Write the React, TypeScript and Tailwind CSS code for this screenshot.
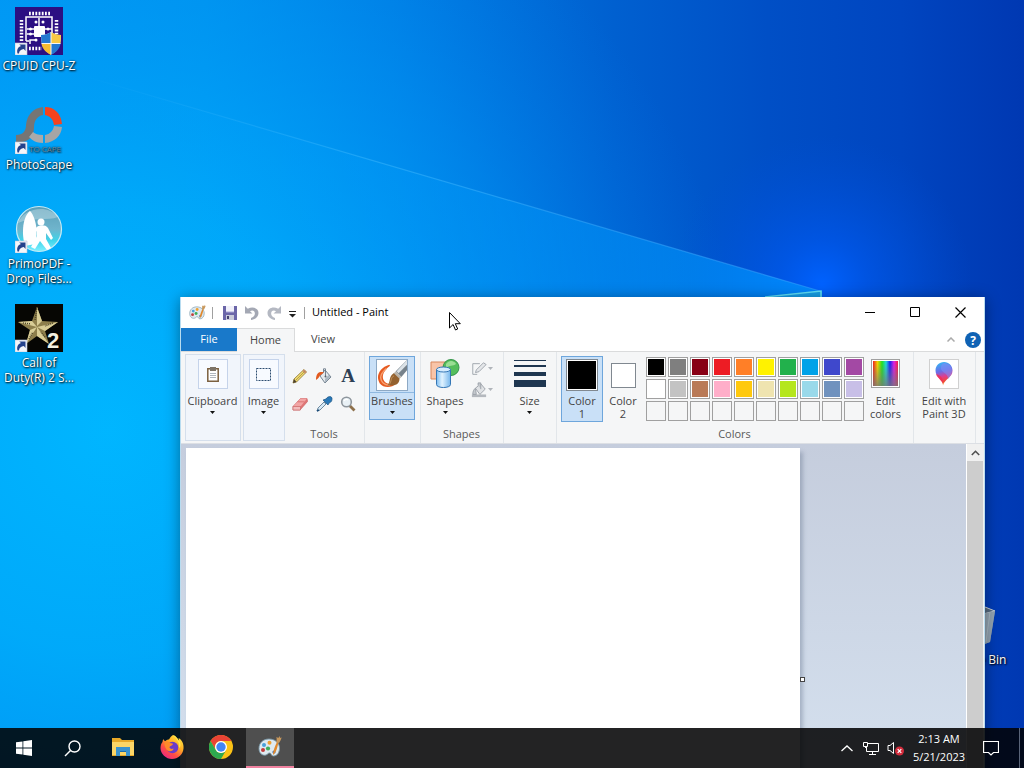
import type { ReactNode } from 'react'
import { clsx } from 'clsx'

const paletteColors = [
  ['Black', '#000000'],
  ['Gray-50%', '#7f7f7f'],
  ['Dark red', '#880015'],
  ['Red', '#ed1c24'],
  ['Orange', '#ff7f27'],
  ['Yellow', '#fff200'],
  ['Green', '#22b14c'],
  ['Turquoise', '#00a2e8'],
  ['Indigo', '#3f48cc'],
  ['Purple', '#a349a4'],
  ['White', '#ffffff'],
  ['Gray-25%', '#c3c3c3'],
  ['Brown', '#b97a57'],
  ['Rose', '#ffaec9'],
  ['Gold', '#ffc90e'],
  ['Light yellow', '#efe4b0'],
  ['Lime', '#b5e61d'],
  ['Light turquoise', '#99d9ea'],
  ['Blue-gray', '#7092be'],
  ['Lavender', '#c8bfe7'],
]

function Wallpaper() {
  return (
    <svg className="absolute inset-0 h-full w-full" viewBox="0 0 1024 768" preserveAspectRatio="none" aria-hidden="true">
      <defs>
        <linearGradient id="sky" x1="0" x2="1" y1="0" y2="0">
          <stop offset="0" stopColor="#0098f2" />
          <stop offset="0.2" stopColor="#0092ec" />
          <stop offset="0.4" stopColor="#007ce2" />
          <stop offset="0.6" stopColor="#0060d0" />
          <stop offset="0.75" stopColor="#004fc6" />
          <stop offset="0.88" stopColor="#0045c0" />
          <stop offset="1" stopColor="#0038b2" />
        </linearGradient>
        <radialGradient id="cyan" gradientUnits="userSpaceOnUse" cx="110" cy="430" r="640">
          <stop offset="0" stopColor="#00b6ff" />
          <stop offset="0.35" stopColor="#00aefc" stopOpacity="0.8" />
          <stop offset="0.7" stopColor="#0098f8" stopOpacity="0.4" />
          <stop offset="1" stopColor="#0080f0" stopOpacity="0" />
        </radialGradient>
        <radialGradient id="glow" gradientUnits="userSpaceOnUse" cx="822" cy="285" r="150">
          <stop offset="0" stopColor="#0062ff" />
          <stop offset="0.3" stopColor="#005af2" stopOpacity="0.65" />
          <stop offset="1" stopColor="#0050d8" stopOpacity="0" />
        </radialGradient>
        <linearGradient id="beam" gradientUnits="userSpaceOnUse" x1="80" y1="75" x2="820" y2="291">
          <stop offset="0" stopColor="#4cc0ff" stopOpacity="0" />
          <stop offset="0.4" stopColor="#4cc0ff" stopOpacity="0.4" />
          <stop offset="1" stopColor="#3ba4ff" stopOpacity="0.5" />
        </linearGradient>
        <linearGradient id="under" gradientUnits="userSpaceOnUse" x1="80" y1="0" x2="820" y2="0">
          <stop offset="0" stopColor="#00a4ff" stopOpacity="0" />
          <stop offset="0.5" stopColor="#00a0ff" stopOpacity="0.25" />
          <stop offset="1" stopColor="#0094ff" stopOpacity="0.75" />
        </linearGradient>
      </defs>
      <rect width="1024" height="768" fill="url(#sky)" />
      <rect width="1024" height="768" fill="url(#cyan)" />
      <rect width="1024" height="768" fill="url(#glow)" />
      <path d="M80 75 820 291V768H80z" fill="url(#under)" />
      <path d="M80 75 820 291" stroke="url(#beam)" strokeWidth="1.200" />
      <path d="M765 298l57-7v10z" fill="#16a0e8" />
      <path d="M765 297l56-6v12" fill="none" stroke="#5fe0f8" strokeWidth="1.500" />
    </svg>
  )
}

function ShortcutArrow() {
  return (
    <g>
      <path d="M0 36h12v12H0z" fill="#f4f6fa" stroke="#b8c4d8" strokeWidth="0.6" />
      <path d="M2.500 46.500c-1-4 .5-6.500 3.500-7.500L4.200 37.500h6.300V44L8.800 42C6 42.500 4 44 4 46.500z" fill="#24428c" />
    </g>
  )
}

function CpuZIcon() {
  return (
    <svg className="size-12" viewBox="0 0 48 48" aria-hidden="true">
      <rect width="48" height="48" fill="#2b0f82" />
      <g stroke="#fff" fill="none">
        <path d="M14 6.500h21M14 41.500h13" strokeWidth="3.500" strokeDasharray="1.800 1.400" />
        <path d="M6.500 13v22M41.500 13v14" strokeWidth="3.500" strokeDasharray="1.800 1.400" />
        <path d="M11 34V10h26v18M11 34h3M15 37v-4h6M12 22h7M12 27h7M24 11v8M29 22h8" strokeWidth="1.500" />
      </g>
      <rect x="19" y="19" width="11" height="11" rx="1" fill="#fff" />
      <g fill="#fff">
        <circle cx="15.500" cy="22" r="1.500" />
        <circle cx="15.500" cy="27" r="1.500" />
        <circle cx="21" cy="15" r="1.500" />
        <circle cx="28" cy="15" r="1.500" />
        <circle cx="33" cy="22" r="1.500" />
        <circle cx="21" cy="33" r="1.500" />
      </g>
      <path d="M36 25c-3 2-6 3-10 3 0 9 2 15 10 20 8-5 10-11 10-20-4 0-7-1-10-3z" fill="#e8edf2" />
      <path d="M36 25c-3 2-6 3-10 3l.5 8.500H36z" fill="#2478d0" />
      <path d="M36 25c3 2 6 3 10 3l-.5 8.500H36z" fill="#f8c944" />
      <path d="M26.500 36.500H36V48c-6-3-9-7-9.500-11.500z" fill="#f5bb30" />
      <path d="M45.500 36.500H36V48c6-3 9-7 9.500-11.500z" fill="#2478d0" />
      <path d="M36 25v22M26.500 36.500h19" stroke="#f5f5f5" strokeWidth="1" />
      <ShortcutArrow />
    </svg>
  )
}

function PhotoScapeIcon() {
  return (
    <svg className="size-12" viewBox="0 0 48 48" aria-hidden="true">
      <path d="M28 1v8c-6 1-9 6-9 12 0 8-4 14-12 15H1v-7c7 0 10-4 10-10C12 9 18 2 28 1z" fill="#757575" />
      <path d="M30 1c9 0 16 6 17 17l-8 1c-1-6-4-9-9-10z" fill="#f5431e" />
      <path d="M39 20l8 1c-1 9-7 15-17 16v-8c5-1 8-4 9-9z" fill="#a5a5a5" />
      <path d="M18 26c2 2 5 3 10 3v8c-7 0-11-3-14-6z" fill="#aaa" />
      <text x="14" y="46" fontSize="8" fill="#6f8698" fontFamily="Open Sans, sans-serif">TO CAPE</text>
      <ShortcutArrow />
    </svg>
  )
}

function PrimoIcon() {
  return (
    <svg className="size-12" viewBox="0 0 48 48" aria-hidden="true">
      <defs>
        <linearGradient id="primo" x2="0" y2="1">
          <stop stopColor="#5a9fb8" />
          <stop offset="0.5" stopColor="#6fb4cc" />
          <stop offset="0.75" stopColor="#3fd4ea" />
          <stop offset="1" stopColor="#7ff0ff" />
        </linearGradient>
      </defs>
      <circle cx="24" cy="24" r="22.500" fill="url(#primo)" stroke="#c6eaf5" strokeWidth="1.200" />
      <path d="M3 18C8 4 32-2 43 12c-10 4-28 0-40 6z" fill="#fff" opacity="0.3" />
      <path d="M15 6c-7 5-9 22-5 35l10-2C24 26 20 11 15 6z" fill="#fff" />
      <circle cx="26" cy="17" r="3.500" fill="#fff" />
      <path d="M21 23c2-3 9-4 12 0l5 10-2 2-5-7v6l5 9-4 2-7-9-5 8-4-2 6-11v-5l-5 4-2-2z" fill="#fff" />
      <ShortcutArrow />
    </svg>
  )
}

function CallOfDutyIcon() {
  return (
    <svg className="size-12" viewBox="0 0 48 48" aria-hidden="true">
      <rect width="48" height="48" fill="#060603" />
      <path d="M22 3l5 14 16 1-13 9 4 13-12-8-11 8 4-14L3 18l14-1z" fill="#8d7f4c" />
      <path d="M22 3v19l5-5zM43 18l-21 5 8 4zM34 40L22 23v9zM11 40l11-17-7 3zM3 18l19 5-5-6z" fill="#d8cd96" />
      <path d="M22 3l-2 13M38 19l-8 3M14 35l4-7M8 19l8 1M30 33l-4-5" stroke="#4e4528" strokeWidth="1.500" strokeDasharray="1 1" />
      <text x="32" y="44" fontSize="22" fontWeight="700" fill="#f2efdf" fontFamily="Liberation Sans, sans-serif">2</text>
      <ShortcutArrow />
    </svg>
  )
}

function RecycleBinIcon() {
  return (
    <svg className="size-12" viewBox="0 0 48 48" aria-hidden="true">
      <path d="M6 8l28-2 10 4-5 31-14 5-14-4z" fill="#7f92a4" />
      <path d="M6 8l28-2 10 4-16 4z" fill="#566a80" stroke="#c5ced8" />
      <path d="M28 14l16-4-5 31-13 5z" fill="#93a4b2" />
      <path d="M35 41l4-30" stroke="#a9b8c2" />
    </svg>
  )
}

function Palette({ className }: { className?: string }) {
  return (
    <svg className={className} viewBox="0 0 24 24" aria-hidden="true">
      <path d="M11 4C5 4 1 8 1 13.500 1 18 4 21 8 20c2-.5 2-2.500 4-2 1.500.4 1 3 3.500 3 4 0 6-4 6-8C21.500 8 17 4 11 4z" fill="#dfeaf0" stroke="#7b98a8" strokeWidth="0.9" />
      <circle cx="6" cy="10" r="2" fill="#4aa0d8" />
      <circle cx="11.500" cy="7.800" r="2" fill="#f0a030" />
      <circle cx="5" cy="15" r="2" fill="#c23b3b" />
      <circle cx="10" cy="13.500" r="2.100" fill="#3fae5a" />
      <circle cx="16" cy="17" r="1.600" fill="#3070c0" />
      <path d="M15 20c0-3 1-7 4-13l1.500.6C19 14 18 18 15 20z" fill="#e0882c" />
      <path d="M18.400 7.500c0-2 .6-3.500 0-5.500l2 1 1-2 .8 2 1.300-.8c0 2-1.500 4-2.500 5.800z" fill="#c8985c" />
    </svg>
  )
}

function DesktopIcon({ icon, label }: { icon: ReactNode; label: string }) {
  return (
    <a
      href="#"
      className="flex w-[78px] flex-col items-center gap-[3px] text-center text-xs leading-[15px] text-white [text-shadow:1px_1px_2px_#000,0_0_2px_#000a]"
    >
      {icon}
      <span className="whitespace-pre">{label}</span>
    </a>
  )
}

function Arrow() {
  return <svg className="h-[3px] w-[5px]" viewBox="0 0 5 3" aria-hidden="true"><path d="M0 0h5L2.500 3z" fill="#111" /></svg>
}

function RibbonButton({
  icon,
  label,
  arrow,
  active,
  className,
}: {
  icon: ReactNode
  label: string
  arrow?: boolean
  active?: boolean
  className?: string
}) {
  return (
    <button
      type="button"
      className={clsx(
        'flex shrink-0 flex-col items-center border',
        active ? 'border-[#6ea6dc] bg-[#c9e0f7]' : 'border-transparent',
        className,
      )}
    >
      <span className={clsx('flex h-9 w-full justify-center', active && arrow ? 'items-center border-b border-[#8fb8e0]' : 'pt-[2px]')}>
        {icon}
      </span>
      <span className="mt-px whitespace-pre-line">{label}</span>
      {arrow && <span className="flex h-3 justify-center pt-1"><Arrow /></span>}
    </button>
  )
}

function Group({ label, className, children }: { label?: string; className?: string; children: ReactNode }) {
  return (
    <section className={clsx('flex shrink-0 flex-col border-r border-[#e2e6ea] pr-px pt-1', className)}>
      <div className="flex grow items-start justify-center">{children}</div>
      {label && <h2 className="pb-[2px] text-center leading-[15px] text-[#5a5a5a]">{label}</h2>}
    </section>
  )
}

function Boxed({ children }: { children: ReactNode }) {
  return <span className="flex size-[30px] items-center justify-center border border-[#c5d3ea] bg-[#f7faff]">{children}</span>
}

const tools = [
  {
    name: 'Pencil',
    icon: (
      <>
        <path d="M1 15l1-4L12 1.500l2.500 2.500L4.500 14z" fill="#f0da70" stroke="#8b7430" strokeWidth="0.8" />
        <path d="M1 15l1-4 2.500 3z" fill="#4a4030" />
        <path d="M12 1.500l2.500 2.500-1.500 1.500L10.500 3z" fill="#c98b6a" />
        <path d="M3.500 12.500l9-9" stroke="#9c873a" strokeWidth="0.7" />
      </>
    ),
  },
  {
    name: 'Fill with color',
    icon: (
      <>
        <path d="M4 8l5-6 6 7-6 6z" fill="#e4e9ed" stroke="#697887" strokeWidth="0.9" />
        <path d="M7.500 4.500V.8h2v7.500" fill="none" stroke="#697887" strokeWidth="0.9" />
        <path d="M9 14.500l5.500-5.500-2-2L9 11z" fill="#aab7c2" />
        <path d="M8 4.500C3 3 0 5 0 12c2-1 3-3 4-4.500z" fill="#e25a20" />
        <circle cx="9.500" cy="8.500" r="1" fill="#56626d" />
      </>
    ),
  },
  {
    name: 'Text',
    icon: <text x="8" y="14" textAnchor="middle" fontFamily="Liberation Serif, serif" fontSize="19" fontWeight="700" fill="#2d3f55">A</text>,
  },
  {
    name: 'Eraser',
    icon: (
      <>
        <path d="M1 10.500L8.500 2.500H15l.5 3L8 14H1z" fill="#e07676" stroke="#c85f60" strokeWidth="0.7" />
        <path d="M1 10.500l7.500-8H15l-6.500 8z" fill="#f2a5a5" />
        <path d="M1 10.500h7.500V14H1z" fill="#f2bcbc" stroke="#c85f60" strokeWidth="0.6" />
        <path d="M5.500 5.800h6.800" stroke="#d56a6a" strokeWidth="0.8" />
      </>
    ),
  },
  {
    name: 'Color picker',
    icon: (
      <>
        <path d="M1 15l1-3 6-6 2 2-6 6z" fill="#d6e8f5" stroke="#617f96" strokeWidth="0.9" />
        <path d="M7 4l5 5 1-2c3-1 3-3 3-5-1-2-4-2-6 1z" fill="#2878b8" stroke="#1a527f" strokeWidth="0.7" />
        <path d="M1 15l2-1" stroke="#1b4b78" strokeWidth="1.500" />
      </>
    ),
  },
  {
    name: 'Magnifier',
    icon: (
      <>
        <path d="M9.500 9.500l5 5" stroke="#8d704c" strokeWidth="2.800" />
        <circle cx="6.500" cy="6" r="4.800" fill="#e9f1f6" stroke="#8e969d" strokeWidth="1.600" />
        <path d="M4 5c1-2 3-2 4-1" stroke="#fff" strokeWidth="1.400" fill="none" />
      </>
    ),
  },
]

function BrushPicture() {
  return (
    <svg className="size-8 border border-[#8da9c5] bg-white" viewBox="0 0 32 32" aria-hidden="true">
      <path d="M13 5C3 8-2 17 3 25c4 5 13 5 17 0-5 1-9 1-12-2-4-5-1-12 6-17z" fill="#e65a20" />
      <path d="M10 9c-6 5-8 10-4 15 2 2 5 3 8 3" stroke="#f7a070" strokeWidth="1.500" fill="none" />
      <path d="M32 0L20 12l6 6 6-7z" fill="#77828b" />
      <path d="M32 0L21 12l2 2 9-9z" fill="#dbe2e7" />
      <path d="M20 12l6 6-3 3-6-6z" fill="#b9b3a9" />
      <path d="M18 14l6 6c0 7-7 8-13 7 4-3 1-10 7-13z" fill="#94622f" />
      <path d="M18 17c-4 2-2 6-5 9" stroke="#c59560" fill="none" />
    </svg>
  )
}

function ShapesPicture() {
  return (
    <svg className="h-8 w-[30px]" viewBox="0 0 30 32" aria-hidden="true">
      <defs>
        <linearGradient id="cylinder">
          <stop stopColor="#7dbcf0" />
          <stop offset="0.4" stopColor="#e1f3ff" />
          <stop offset="1" stopColor="#76b6ec" />
        </linearGradient>
      </defs>
      <path d="M1 3h17v17H1z" fill="#f8c4a8" stroke="#d8875c" />
      <circle cx="21" cy="8.500" r="8" fill="#54bd5c" stroke="#35954a" />
      <path d="M16 5c3-5 9-3 10 0-3 3-7 0-10 5z" fill="#b8edae" opacity="0.7" />
      <path d="M6.500 10.500v15c0 4 14 4 14 0v-15z" fill="url(#cylinder)" stroke="#3476b5" />
      <ellipse cx="13.500" cy="10.500" rx="7" ry="2.500" fill="#d5ecff" stroke="#3476b5" />
    </svg>
  )
}

function RainbowPicture() {
  return (
    <span className="flex size-[29px] border border-[#a0a0a0] bg-white p-px">
      <span className="grow bg-[linear-gradient(to_top,#777c_0%,#7770_90%),linear-gradient(to_right,#f02020,#f0d000_18%,#20e020_36%,#20d8d8_52%,#2020f0_68%,#e020e0_84%,#f02040)]" />
    </span>
  )
}

function Paint3DPicture() {
  return (
    <svg className="h-6 w-5" viewBox="0 0 20 24" aria-hidden="true">
      <defs>
        <linearGradient id="drop" x1="0.200" y1="0" x2="0.400" y2="1">
          <stop stopColor="#32b8f4" />
          <stop offset="0.4" stopColor="#6a6de8" />
          <stop offset="0.65" stopColor="#e23d8c" />
          <stop offset="0.85" stopColor="#ef4c35" />
          <stop offset="1" stopColor="#f0a030" />
        </linearGradient>
      </defs>
      <path d="M10 0c5 0 8.500 4 8.500 8.500 0 7-8 8.500-9.500 15 .5-5-7.500-8-7.500-15C1.500 4 5 0 10 0z" fill="url(#drop)" />
      <path d="M10 1c5 0 8 4 8 8 0 3-2 6-4 8 0-7-8-6-7-12 0-2 1-3 3-4z" fill="#7d8df5" opacity="0.6" />
      <path d="M2 12c4 1 8 4 7 10-1-4-6-6-7-10z" fill="#f03058" opacity="0.8" />
    </svg>
  )
}

function TitleBar() {
  return (
    <header className="flex h-[31px] items-center bg-white">
      <Palette className="ml-2 size-[17px]" />
      <span className="ml-[6px] h-3 w-px bg-[#a0a0a0]" />
      <button type="button" aria-label="Save" className="ml-[10px]">
        <svg className="size-[14px]" viewBox="0 0 14 14" aria-hidden="true">
          <path d="M0 0h14v14H0z" fill="#6b66a8" />
          <path d="M3 0h8v6H3z" fill="#f1f1fb" />
          <path d="M3 9h8v5H3z" fill="#c9cbd9" />
          <path d="M4 10h2v3H4z" fill="#44406f" />
          <path d="M3 6h8" stroke="#a9a6d4" />
        </svg>
      </button>
      <button type="button" aria-label="Undo" className="ml-2">
        <svg className="size-[14px]" viewBox="0 0 14 14" aria-hidden="true">
          <path d="M0 0v7.500h7.500L5 5.200C8 3.500 10.300 5.500 9.800 8.200 9.300 10.300 7.500 11.500 6 12v2c4-.5 7.500-3 7.500-7C13.500 2.500 8 0 2.800 2.800z" fill="#a4a8b4" />
        </svg>
      </button>
      <button type="button" aria-label="Redo" className="ml-2">
        <svg className="size-[14px]" viewBox="0 0 14 14" aria-hidden="true">
          <path d="M14 0v7.500H6.500L9 5.200C6 3.500 3.700 5.500 4.200 8.200 4.700 10.300 6.500 11.500 8 12v2C4 13.500.5 11 .5 7 .5 2.500 6 0 11.200 2.800z" fill="#b4b8c2" />
        </svg>
      </button>
      <button type="button" aria-label="Customize Quick Access Toolbar" className="ml-2 mt-1">
        <svg className="h-[7px] w-[7px]" viewBox="0 0 7 7" aria-hidden="true">
          <path d="M0 .5h7" stroke="#222" />
          <path d="M0 3h7L3.500 6.500z" fill="#222" />
        </svg>
      </button>
      <span className="ml-2 h-3 w-px bg-[#a0a0a0]" />
      <h1 className="ml-[7px] text-[11px] text-black">Untitled - Paint</h1>
      <div className="ml-auto flex self-stretch pr-px">
        <button type="button" aria-label="Minimize" className="flex w-[45px] items-center justify-center">
          <svg className="size-[11px]" viewBox="0 0 11 11" aria-hidden="true"><path d="M0 5.500h10" stroke="#000" /></svg>
        </button>
        <button type="button" aria-label="Maximize" className="flex w-[45px] items-center justify-center">
          <svg className="size-[11px]" viewBox="0 0 11 11" aria-hidden="true"><path d="M.5.5h9v9h-9z" fill="none" stroke="#000" /></svg>
        </button>
        <button type="button" aria-label="Close" className="flex w-[45px] items-center justify-center">
          <svg className="size-[11px]" viewBox="0 0 11 11" aria-hidden="true"><path d="M.5.5l10 10M10.500.5l-10 10" stroke="#000" strokeWidth="1.200" /></svg>
        </button>
      </div>
    </header>
  )
}

function Tabs() {
  return (
    <nav className="flex h-6 items-stretch border-b border-[#dadbdc] bg-white text-[11px] text-[#444]">
      <button type="button" className="w-14 bg-[#1979ca] text-white">File</button>
      <button type="button" className="-mb-px w-[58px] border-r border-t border-[#dadbdc] bg-[#f5f6f7]">Home</button>
      <button type="button" className="w-14">View</button>
      <div className="ml-auto flex items-center gap-[10px] pr-[3px]">
        <button type="button" aria-label="Minimize the Ribbon">
          <svg className="h-[5px] w-2" viewBox="0 0 8 5" aria-hidden="true"><path d="M.5 4.500L4 1l3.500 3.500" fill="none" stroke="#aaa" strokeWidth="1.500" /></svg>
        </button>
        <button type="button" aria-label="Help" className="size-4">
          <svg className="size-4" viewBox="0 0 16 16" aria-hidden="true">
            <circle cx="8" cy="8" r="8" fill="#0f62b4" />
            <text x="8" y="12.500" textAnchor="middle" fontSize="12" fontWeight="700" fill="#fff" fontFamily="Open Sans, sans-serif">?</text>
          </svg>
        </button>
      </div>
    </nav>
  )
}

function Ribbon() {
  return (
    <div className="flex h-[92px] overflow-hidden border-b border-[#dcdfe4] bg-[#f5f6f7] text-[11px] leading-[13px] text-[#444]">
      <div className="my-[2px] ml-1 flex w-14 shrink-0 items-start justify-center border border-[#d5dfec] bg-[#f1f5fb] pr-px pt-px">
        <RibbonButton
          label="Clipboard"
          arrow
          icon={
            <Boxed>
              <svg className="h-[15px] w-3" viewBox="0 0 12 15" aria-hidden="true">
                <path d="M.8 1.800h10.400v12.400H.8z" fill="#fff" stroke="#7b6040" strokeWidth="1.500" />
                <path d="M3 0h6v4H3z" fill="#7d7468" />
                <path d="M3 6.500h6M3 8.500h6M3 10.500h6" stroke="#9aa3ad" strokeWidth="0.800" />
              </svg>
            </Boxed>
          }
        />
      </div>
      <div className="my-[2px] ml-[2px] flex w-[42px] shrink-0 items-start justify-center border border-[#d5dfec] bg-[#f1f5fb] pr-px pt-px">
        <RibbonButton
          label="Image"
          arrow
          icon={
            <Boxed>
              <svg className="h-[13px] w-[15px]" viewBox="0 0 15 13" aria-hidden="true">
                <path d="M.5.5h14v12H.5z" fill="none" stroke="#2c4d70" strokeDasharray="2 1" />
              </svg>
            </Boxed>
          }
        />
      </div>

      <Group label="Tools" className="w-20">
        <div className="grid grid-cols-[24px_24px_24px] grid-rows-[28px_28px] pt-[6px]">
          {tools.map((tool) => (
            <button key={tool.name} type="button" aria-label={tool.name} className="flex items-center justify-center">
              <svg className="size-4 overflow-visible" viewBox="0 0 16 16" aria-hidden="true">{tool.icon}</svg>
            </button>
          ))}
        </div>
      </Group>

      <Group className="w-14">
        <RibbonButton label="Brushes" arrow active className="w-[46px]" icon={<BrushPicture />} />
      </Group>

      <Group label="Shapes" className="w-[83px]">
        <div className="flex grow gap-[2px]">
          <RibbonButton label="Shapes" arrow className="w-12" icon={<ShapesPicture />} />
          <div className="flex flex-col pt-[2px]">
            <button type="button" aria-label="Outline" className="flex h-[21px] items-center gap-px">
              <svg className="size-4" viewBox="0 0 18 18" aria-hidden="true">
                <path d="M10 3H2v12h5" fill="none" stroke="#9aa0a8" />
                <path d="M5 13l1-3 8-8 3 2-8 8z" fill="#e4e6e9" stroke="#9aa0a8" />
              </svg>
              <svg className="h-[3px] w-[5px]" viewBox="0 0 5 3" aria-hidden="true"><path d="M0 0h5L2.500 3z" fill="#b0b4ba" /></svg>
            </button>
            <button type="button" aria-label="Fill" className="flex h-[21px] items-center gap-px">
              <svg className="size-4" viewBox="0 0 18 18" aria-hidden="true">
                <path d="M1 14h16v3H1z" fill="#b4b8be" />
                <path d="M5 7l6-5 5 6-6 6z" fill="#e0e2e5" stroke="#989ea6" />
                <path d="M5 7C3 8 2 11 2 14h4zM8 4V1h3v7" fill="#c4c8cd" stroke="#989ea6" />
              </svg>
              <svg className="h-[3px] w-[5px]" viewBox="0 0 5 3" aria-hidden="true"><path d="M0 0h5L2.500 3z" fill="#b0b4ba" /></svg>
            </button>
          </div>
        </div>
      </Group>

      <Group className="w-[53px] pr-[3px]">
        <RibbonButton
          label="Size"
          arrow
          icon={
            <svg className="h-7 w-8" viewBox="0 0 32 28" aria-hidden="true">
              <path d="M0 1h32v1H0zM0 6h32v2H0zM0 13h32v4H0zM0 21h32v7H0z" fill="#1e3650" />
            </svg>
          }
        />
      </Group>

      <Group label="Colors" className="w-[357px]">
        <div className="flex grow items-start pl-1">
          <RibbonButton
            label={'Color\n1'}
            active
            className="w-[42px] pb-px"
            icon={<span className="size-8 border border-[#808890] bg-black outline -outline-offset-2 outline-white" />}
          />
          <RibbonButton
            label={'Color\n2'}
            className="w-10"
            icon={<span className="mt-1 size-[25px] border border-[#808890] bg-white" />}
          />
          <div className="ml-[3px] grid grid-cols-10 gap-[2px] pt-px">
            {paletteColors.map(([name, color]) => (
              <button key={name} type="button" aria-label={name} className="size-5 border border-[#a0a0a0] bg-white p-px">
                <span className="block size-4" style={{ backgroundColor: color }} />
              </button>
            ))}
            {Array.from({ length: 10 }, (_, i) => (
              <button key={i} type="button" aria-label={`Custom color ${i + 1}`} className="size-5 border border-[#a0a0a0]" />
            ))}
          </div>
          <RibbonButton label={'Edit\ncolors'} className="w-[43px]" icon={<RainbowPicture />} />
        </div>
      </Group>

      <Group className="w-[62px] pr-[3px]">
        <RibbonButton
          label={'Edit with\nPaint 3D'}
          icon={
            <span className="flex size-[30px] items-center justify-center border border-[#d0d0d0] bg-white">
              <Paint3DPicture />
            </span>
          }
        />
      </Group>
    </div>
  )
}

function PaintWindow() {
  return (
    <main className="absolute -bottom-10 left-[180px] right-[39px] top-[297px] flex flex-col border-x border-[#b8dcf0] bg-white shadow-[0_2px_14px_rgba(0,0,0,0.4)]">
      <TitleBar />
      <Tabs />
      <Ribbon />
      <div className="flex grow bg-linear-to-b from-[#c5cddd] to-[#d6e2f0]">
        <div className="flex grow items-stretch pl-[5px] pt-1">
          <div className="w-[614px] bg-white shadow-[3px_4px_4px_rgba(100,115,140,0.4)]" />
          <span className="mt-[229px] size-[5px] border border-[#444] bg-white" />
        </div>
        <div className="flex w-[18px] flex-col border-l border-white bg-[#f0f0f0]">
          <button type="button" aria-label="Scroll up" className="flex h-[17px] items-center justify-center">
            <svg className="h-[6px] w-[9px]" viewBox="0 0 9 6" aria-hidden="true"><path d="M.8 5L4.500 1.300 8.200 5" fill="none" stroke="#505050" strokeWidth="1.600" /></svg>
          </button>
          <div className="mr-px grow bg-[#cdcdcd]" />
        </div>
      </div>
    </main>
  )
}

function FirefoxIcon() {
  return (
    <svg className="size-6" viewBox="0 0 24 24" aria-hidden="true">
      <defs>
        <linearGradient id="fox" x1="0.900" y1="0" x2="0.200" y2="1">
          <stop stopColor="#fff24a" />
          <stop offset="0.4" stopColor="#ffac24" />
          <stop offset="0.7" stopColor="#ff4c45" />
          <stop offset="1" stopColor="#e8238c" />
        </linearGradient>
      </defs>
      <path d="M13 0c3 1 5 4 6 6 0-1 0-2-.5-3C22 5 24 9 23.500 13.500 23 19.500 18 24 12 24S.5 19 .5 13c0-3 1-5 2-6 0-1 .3-2 1-3 .5 1.500 1 2 2 2 1-1 2-1.500 3.500-1.500C10 3 11 1 13 0z" fill="url(#fox)" />
      <circle cx="12.500" cy="12.500" r="5.800" fill="#6a3cc8" />
      <path d="M5 6c2 0 4 1 5 2 1 .3 2.500.3 3 1-.5 2-3 1.500-3.500 3 0 1.500 2 2.500 4 1.500 0 3-5 4-7 1S4 8 5 6z" fill="#ff8a2a" />
      <path d="M13 0c3 3 7 7 6 13 2-1 2-5 0-7-1-2-3-5-6-6z" fill="#ffe94a" />
    </svg>
  )
}

function ChromeIcon() {
  return (
    <svg className="size-6" viewBox="0 0 24 24" aria-hidden="true">
      <circle cx="12" cy="12" r="12" fill="#fbc116" />
      <path d="M1.600 6A12 12 0 0 1 22.400 6H12a6 6 0 0 0-5.200 9z" fill="#ea4335" />
      <path d="M1.600 6A12 12 0 0 0 12 24l5.200-9A6 6 0 0 1 6.800 15z" fill="#2da94f" />
      <circle cx="12" cy="12" r="6" fill="#fff" />
      <circle cx="12" cy="12" r="4.700" fill="#4285f4" />
    </svg>
  )
}

const pinnedApps = [
  {
    name: 'File Explorer',
    icon: (
      <svg className="h-5 w-[22px]" viewBox="0 0 22 20" aria-hidden="true">
        <path d="M0 1h8l2 2h12v16H0z" fill="#e8a928" />
        <path d="M0 5h22v13H0z" fill="#fcd667" />
        <path d="M4 10h14v9h-4v-5H8v5H4z" fill="#3a93cf" />
        <path d="M8 14h6v1H8z" fill="#1d6ca8" />
      </svg>
    ),
  },
  { name: 'Firefox', icon: <FirefoxIcon /> },
  { name: 'Chrome', icon: <ChromeIcon /> },
  { name: 'Paint', icon: <Palette className="size-6" />, active: true },
]

function Taskbar() {
  return (
    <footer className="absolute inset-x-0 bottom-0 flex h-10 items-stretch bg-[#020204]/87 text-white">
      <button type="button" aria-label="Start" className="flex w-12 items-center justify-center">
        <svg className="size-4" viewBox="0 0 16 16" aria-hidden="true">
          <path d="M0 2.300l6.500-.9v6.200H0zM7.300 1.300L16 0v7.600H7.300zM0 8.400h6.500v6.200L0 13.700zM7.300 8.400H16V16l-8.700-1.300z" fill="#fff" />
        </svg>
      </button>
      <button type="button" aria-label="Search" className="flex w-12 items-center justify-center">
        <svg className="size-[17px]" viewBox="0 0 17 17" aria-hidden="true">
          <circle cx="10.500" cy="6.500" r="5.500" fill="none" stroke="#fff" strokeWidth="1.400" />
          <path d="M6.500 10.500L1 16" stroke="#fff" strokeWidth="1.400" />
        </svg>
      </button>
      <div className="ml-[3px] flex gap-px">
        {pinnedApps.map((app) => (
          <button
            key={app.name}
            type="button"
            aria-label={app.name}
            className={clsx(
              'flex w-12 items-center justify-center border-b-2',
              app.active ? 'border-[#f082a0] bg-white/20' : 'border-transparent',
            )}
          >
            {app.icon}
          </button>
        ))}
      </div>
      <div className="ml-auto flex items-center">
        <button type="button" aria-label="Show hidden icons" className="flex w-6 justify-center">
          <svg className="h-[7px] w-3" viewBox="0 0 12 7" aria-hidden="true"><path d="M.5 6L6 1l5.500 5" fill="none" stroke="#fff" strokeWidth="1.300" /></svg>
        </button>
        <button type="button" aria-label="Network" className="flex w-6 justify-center">
          <svg className="h-[15px] w-4" viewBox="0 0 16 15" aria-hidden="true">
            <path d="M5 2.500h10.500v8H3.500V6M9.500 10.500v3M6 13.500h7" fill="none" stroke="#fff" />
            <path d="M.5 1.500h4v4h-4zM2.500 5.500V7" fill="none" stroke="#fff" />
          </svg>
        </button>
        <button type="button" aria-label="Volume" className="flex w-6 justify-center">
          <svg className="h-[15px] w-[17px]" viewBox="0 0 17 15" aria-hidden="true">
            <path d="M1 4.500h2l3.500-3v11L3 9.500H1z" fill="none" stroke="#fff" />
            <circle cx="12.500" cy="10" r="4.500" fill="#d22c3c" />
            <path d="M10.700 8.200l3.600 3.600M14.300 8.200l-3.600 3.600" stroke="#fff" strokeWidth="1.200" />
          </svg>
        </button>
        <button type="button" className="ml-px w-[62px] text-center text-[11px] leading-[18px]">
          2:13 AM
          <br />
          5/21/2023
        </button>
        <button type="button" aria-label="Notifications" className="ml-[6px] flex w-[30px] justify-center">
          <svg className="size-4" viewBox="0 0 16 16" aria-hidden="true">
            <path d="M.5 1.500h15v11h-5L8 15l-2.500-2.500h-5z" fill="none" stroke="#fff" strokeWidth="1.200" />
          </svg>
        </button>
        <button type="button" aria-label="Show desktop" className="ml-[13px] w-[5px] self-stretch border-l border-[#5a6478]" />
      </div>
    </footer>
  )
}

export default function App() {
  return (
    <div className="relative h-screen overflow-hidden bg-[#0070dc] font-['Open_Sans','Noto_Sans',sans-serif]">
      <Wallpaper />
      <div className="relative grid w-[78px] auto-rows-[99px] pt-[7px]">
        <DesktopIcon icon={<CpuZIcon />} label="CPUID CPU-Z" />
        <DesktopIcon icon={<PhotoScapeIcon />} label="PhotoScape" />
        <DesktopIcon icon={<PrimoIcon />} label={'PrimoPDF -\nDrop Files...'} />
        <DesktopIcon icon={<CallOfDutyIcon />} label={'Call of\nDuty(R) 2 S...'} />
      </div>
      <div className="absolute right-[10px] top-[601px]">
        <DesktopIcon icon={<RecycleBinIcon />} label="Recycle Bin" />
      </div>
      <PaintWindow />
      <Taskbar />
      <svg className="absolute left-[449px] top-[312px] h-[19px] w-3" viewBox="0 0 12 19" aria-hidden="true">
        <path d="M.5.5v15.500l3.600-3.500 2.400 5.500 2.200-1-2.400-5.300h5z" fill="#fff" stroke="#000" />
      </svg>
    </div>
  )
}
